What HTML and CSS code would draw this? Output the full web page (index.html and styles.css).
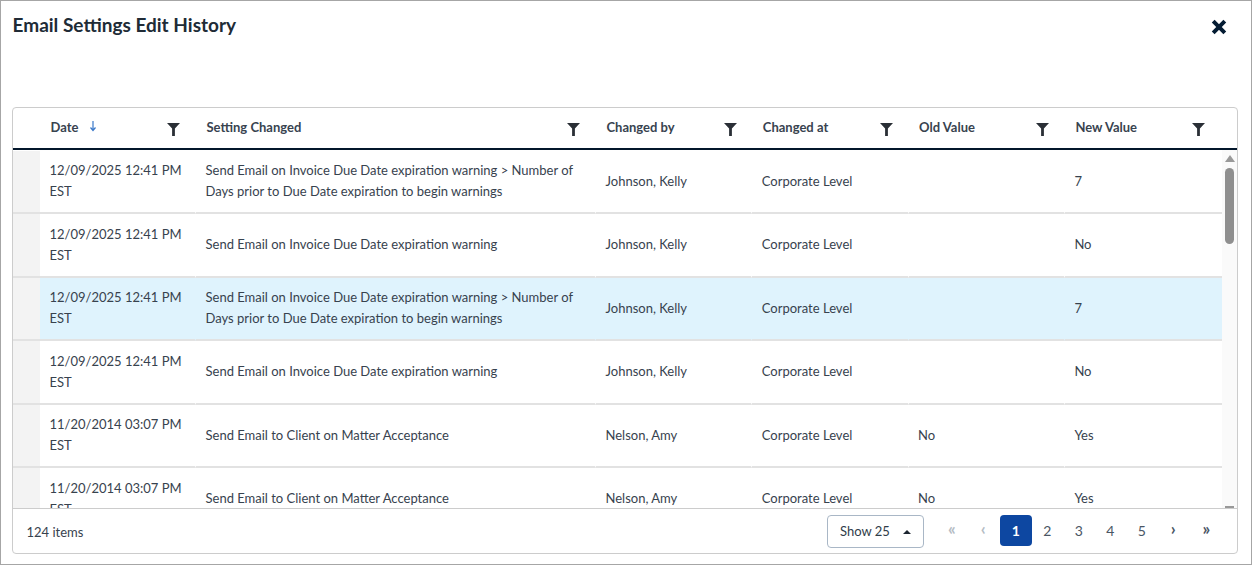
FILE: index.html
```html
<!DOCTYPE html>
<html lang="en">
<head>
<meta charset="utf-8">
<title>Email Settings Edit History</title>
<link rel="stylesheet" href="styles.css">
</head>
<body>
<svg class="defs" width="0" height="0" aria-hidden="true"><symbol id="funnel" viewBox="0 0 13 13"><path d="M0 0h13L7.900 5.600V13H5.100V5.600z"/></symbol></svg>
<main class="dialog">
  <header class="title-bar">
    <h1 class="title">Email Settings Edit History</h1>
    <button class="close" aria-label="Close"><svg viewBox="0 0 16 16" width="16" height="16"><path d="M2.200 2.200l11.600 11.600M13.800 2.200l-11.600 11.600" stroke="#041c33" stroke-width="4" fill="none"/></svg></button>
  </header>
  <section class="panel">
    <div class="head">
      <div class="gutter-head"></div>
      <div class="th c-date"><span class="th-label">Date<svg class="sort" viewBox="0 0 8 12" width="8" height="12"><path d="M4 1v9M1.500 7.500L4 10.500l2.500-3" stroke="#3a78c9" stroke-width="1.200" fill="none"/></svg></span><svg class="funnel"><use href="#funnel"/></svg></div>
      <div class="th c-setting"><span class="th-label">Setting Changed</span><svg class="funnel"><use href="#funnel"/></svg></div>
      <div class="th c-std"><span class="th-label">Changed by</span><svg class="funnel"><use href="#funnel"/></svg></div>
      <div class="th c-std"><span class="th-label">Changed at</span><svg class="funnel"><use href="#funnel"/></svg></div>
      <div class="th c-std"><span class="th-label">Old Value</span><svg class="funnel"><use href="#funnel"/></svg></div>
      <div class="th c-std"><span class="th-label">New Value</span><svg class="funnel"><use href="#funnel"/></svg></div>
      <div class="head-end"></div>
    </div>
    <div class="body">
      <div class="rows">
        <div class="row">
          <div class="gutter"></div><div class="td c-date">12/09/2025 12:41 PM EST</div>
          <div class="td c-setting">Send Email on Invoice Due Date expiration warning &gt; Number of Days prior to Due Date expiration to begin warnings</div>
          <div class="td c-std">Johnson, Kelly</div><div class="td c-std">Corporate Level</div><div class="td c-std"></div><div class="td c-std">7</div>
        </div>
        <div class="row">
          <div class="gutter"></div><div class="td c-date">12/09/2025 12:41 PM EST</div>
          <div class="td c-setting">Send Email on Invoice Due Date expiration warning</div>
          <div class="td c-std">Johnson, Kelly</div><div class="td c-std">Corporate Level</div><div class="td c-std"></div><div class="td c-std">No</div>
        </div>
        <div class="row selected">
          <div class="gutter"></div><div class="td c-date">12/09/2025 12:41 PM EST</div>
          <div class="td c-setting">Send Email on Invoice Due Date expiration warning &gt; Number of Days prior to Due Date expiration to begin warnings</div>
          <div class="td c-std">Johnson, Kelly</div><div class="td c-std">Corporate Level</div><div class="td c-std"></div><div class="td c-std">7</div>
        </div>
        <div class="row">
          <div class="gutter"></div><div class="td c-date">12/09/2025 12:41 PM EST</div>
          <div class="td c-setting">Send Email on Invoice Due Date expiration warning</div>
          <div class="td c-std">Johnson, Kelly</div><div class="td c-std">Corporate Level</div><div class="td c-std"></div><div class="td c-std">No</div>
        </div>
        <div class="row">
          <div class="gutter"></div><div class="td c-date">11/20/2014 03:07 PM EST</div>
          <div class="td c-setting">Send Email to Client on Matter Acceptance</div>
          <div class="td c-std">Nelson, Amy</div><div class="td c-std">Corporate Level</div><div class="td c-std">No</div><div class="td c-std">Yes</div>
        </div>
        <div class="row">
          <div class="gutter"></div><div class="td c-date">11/20/2014 03:07 PM EST</div>
          <div class="td c-setting">Send Email to Client on Matter Acceptance</div>
          <div class="td c-std">Nelson, Amy</div><div class="td c-std">Corporate Level</div><div class="td c-std">No</div><div class="td c-std">Yes</div>
        </div>
      </div>
      <div class="scrollbar">
        <span class="arrow-up"></span>
        <span class="thumb"></span>
        <span class="arrow-down"></span>
      </div>
    </div>
    <footer class="foot">
      <span class="count">124 items</span>
      <div class="foot-right">
        <button class="show">Show 25<span class="caret"></span></button>
        <nav class="pager">
          <span class="pg arrow off">«</span><span class="pg arrow off">‹</span><span class="pg current">1</span><span class="pg">2</span><span class="pg">3</span><span class="pg">4</span><span class="pg">5</span><span class="pg arrow">›</span><span class="pg arrow last">»</span>
        </nav>
      </div>
    </footer>
  </section>
</main>
</body>
</html>
```
FILE: styles.css
```css
* { box-sizing: border-box; }
html, body { margin: 0; height: 565px; overflow: hidden; }
body { font-family: Lato, sans-serif; color: #2f3c49; background: #fff; }
.defs { position: absolute; }
.dialog { height: 565px; border: 1px solid #a6a6a6; padding: 0 13px 10px 11px; display: flex; flex-direction: column; }
.title-bar { height: 106px; display: flex; justify-content: space-between; align-items: flex-start; }
.title { margin: 11px 0 0 0.500px; font-size: 19px; line-height: 26px; font-weight: 700; color: #202b36; }
.close { border: 0; background: none; padding: 0; margin: 17.500px 11.500px 0 0; width: 16px; height: 16px; }
.close svg { display: block; }
.panel { flex: 1; min-height: 0; border: 1px solid #ccc; border-radius: 4px; display: flex; flex-direction: column; overflow: hidden; }
.head { height: 42px; flex: none; display: flex; border-bottom: 2px solid #03172b; }
.gutter-head, .gutter { width: 27px; flex: none; }
.th { display: flex; align-items: center; justify-content: space-between; padding: 0 15.800px 0 10.500px; font-size: 13px; font-weight: 700; color: #38434f; }
.th-label { display: flex; align-items: center; gap: 11px; margin-top: -2px; }
.sort { margin-top: -3px; }
.funnel { width: 13px; height: 13px; fill: #2a2f36; margin-top: 3px; }
.c-date { width: 156px; flex: none; }
.c-setting { width: 400px; flex: none; }
.c-std { width: 156.300px; flex: none; }
.head-end { flex: 1; }
.body { flex: 1; min-height: 0; display: flex; overflow: hidden; }
.rows { flex: 1; min-width: 0; padding-top: 0.500px; }
.row { height: 63.500px; display: flex; }
.gutter { background: #f3f3f3; border-bottom: 2px solid #e2e2e2; }
.td { display: flex; align-items: center; padding: 0 10px 0 9.500px; font-size: 13px; line-height: 21px; color: #37424e; border-bottom: 2px solid #e2e2e2; border-right: 1px solid #fff; }
.td:last-child { flex: 1; border-right: 0; }
.c-date.td { padding-right: 8px; }
.selected .td { background: #dff3fd; border-right-color: #dff3fd; }
.scrollbar { width: 15px; flex: none; background: #fafafa; display: flex; flex-direction: column; align-items: center; position: relative; }
.arrow-up { margin-top: 5px; width: 0; height: 0; border: 5px solid transparent; border-top: 0; border-bottom: 7px solid #999; }
.thumb { margin-top: 5.500px; width: 9px; height: 76px; border-radius: 5px; background: #8f8f8f; }
.arrow-down { position: absolute; left: 3px; bottom: 0; width: 9px; height: 2px; background: #999; }
.foot { height: 45px; flex: none; border-top: 1px solid #ccc; display: flex; align-items: center; justify-content: space-between; padding: 0 15px 0 13.500px; font-size: 13px; color: #37424e; }
.count { margin-top: 1px; }
.foot-right { display: flex; align-items: flex-start; }
.show { width: 97px; height: 33px; border: 1px solid #a9b7c6; border-radius: 4px; background: #fff; font: inherit; color: #2f3c49; display: flex; align-items: center; justify-content: space-between; padding: 0 12px 0 12.500px; }
.caret { width: 0; height: 0; border: 4px solid transparent; border-top: 0; border-bottom: 4px solid #1c2530; margin-top: 2px; }
.pager { display: flex; align-items: center; margin-left: 12.500px; }
.pg { width: 31.500px; height: 31px; display: flex; align-items: center; justify-content: center; font-size: 14px; color: #4a5664; }
.pg.arrow { font-size: 17px; font-weight: 700; padding-bottom: 3px; }
.pg.off { color: #b5bcc4; }
.pg.last { margin-left: 1.500px; }
.pg.current { margin-left: 1px; background: #0d47a1; color: #fff; font-weight: 700; border-radius: 4px; }
```
